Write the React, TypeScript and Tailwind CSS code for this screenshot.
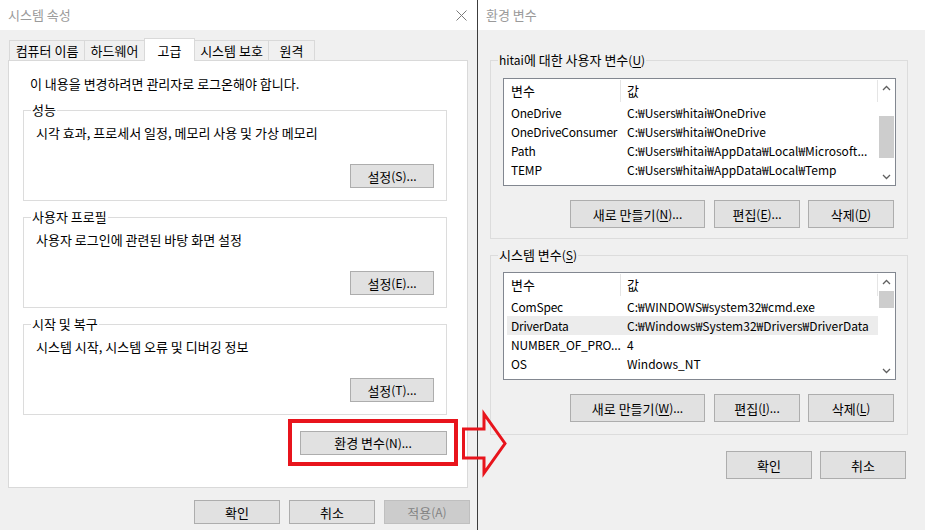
import type { ReactNode } from "react";

function T({ s }: { s: string }) {
  const parts = s.split(/([\uac00-\ud7a3][\uac00-\ud7a3 ]*)/);
  return (
    <>
      {parts.map((p, i) =>
        i % 2 === 1 ? (
          <span key={i} className="text-[13px]">
            {p}
          </span>
        ) : (
          p
        )
      )}
    </>
  );
}

function Btn({
  children,
  className = "",
  disabled = false,
}: {
  children: ReactNode;
  className?: string;
  disabled?: boolean;
}) {
  return (
    <div
      className={`flex shrink-0 items-center justify-center whitespace-pre border leading-none ${
        disabled
          ? "border-[#bfbfbf] bg-[#cccccc] text-[#838383]"
          : "border-[#adadad] bg-[#e1e1e1] text-black"
      } ${className}`}
    >
      {children}
    </div>
  );
}

function Group({
  label,
  labelBg,
  className = "",
  children,
}: {
  label: ReactNode;
  labelBg: string;
  className?: string;
  children: ReactNode;
}) {
  return (
    <div className={`relative flex shrink-0 flex-col border border-[#dcdcdc] ${className}`}>
      <span className={`absolute -top-[9px] left-[7px] whitespace-pre px-px leading-[16px] ${labelBg}`}>{label}</span>
      {children}
    </div>
  );
}

function Chevron({ up }: { up?: boolean }) {
  return (
    <svg width="9" height="6" viewBox="0 0 9 6" className="text-[#606060]">
      <path
        d={up ? "M1 5 L4.5 1.5 L8 5" : "M1 1 L4.5 4.5 L8 1"}
        fill="none"
        stroke="currentColor"
        strokeWidth="1.3"
      />
    </svg>
  );
}

type Row = { name: string; value: string };

function VarList({
  rows,
  selected = -1,
  top,
  thumbTop,
  thumbHeight,
}: {
  rows: Row[];
  selected?: number;
  top: string;
  thumbTop: string;
  thumbHeight: string;
}) {
  return (
    <div className={`ml-[12px] flex h-[108px] w-[393px] shrink-0 overflow-hidden border border-[#828790] bg-white ${top}`}>
      <div className="flex min-w-0 flex-1 flex-col overflow-hidden">
        {/* Header */}
        <div className="flex h-[24px] shrink-0 items-center text-[13px]">
          <div className="w-[116px] shrink-0 pl-[7px]">변수</div>
          <div className="h-[22px] w-px bg-[#e5e5e5]" />
          <div className="flex-1 pl-[6px]">값</div>
          <div className="h-[22px] w-px bg-[#e5e5e5]" />
        </div>
        {rows.map((r, i) => (
          <div
            key={r.name}
            className={`ml-[3px] flex h-[19px] shrink-0 leading-[19px] ${i === selected ? "bg-[#ececec]" : ""}`}
          >
            <div className="w-[114px] shrink-0 overflow-hidden whitespace-nowrap pl-[4px] tracking-[-0.2px]">{r.name}</div>
            <div className="min-w-0 flex-1 truncate pl-[6px] pr-[4px]">{r.value}</div>
          </div>
        ))}
      </div>
      {/* Scrollbar */}
      <div className="flex w-[17px] shrink-0 flex-col">
        <div className="flex h-[17px] items-center justify-center">
          <Chevron up />
        </div>
        <div className="flex-1">
          <div className={`ml-px mr-px bg-[#cdcdcd] ${thumbTop} ${thumbHeight}`} />
        </div>
        <div className="flex h-[17px] items-center justify-center">
          <Chevron />
        </div>
      </div>
    </div>
  );
}

const userVars: Row[] = [
  { name: "OneDrive", value: "C:₩Users₩hitai₩OneDrive" },
  { name: "OneDriveConsumer", value: "C:₩Users₩hitai₩OneDrive" },
  { name: "Path", value: "C:₩Users₩hitai₩AppData₩Local₩Microsoft..." },
  { name: "TEMP", value: "C:₩Users₩hitai₩AppData₩Local₩Temp" },
];

const systemVars: Row[] = [
  { name: "ComSpec", value: "C:₩WINDOWS₩system32₩cmd.exe" },
  { name: "DriverData", value: "C:₩Windows₩System32₩Drivers₩DriverData" },
  { name: "NUMBER_OF_PRO...", value: "4" },
  { name: "OS", value: "Windows_NT" },
];

const tabs = [
  { label: "컴퓨터 이름", w: "w-[76px]" },
  { label: "하드웨어", w: "w-[61px]" },
  { label: "고급", w: "w-[51px]", active: true },
  { label: "시스템 보호", w: "w-[75px]" },
  { label: "원격", w: "w-[47px]" },
];

export default function App() {
  return (
    <div className="relative flex h-[530px] w-[925px] overflow-hidden bg-[#f0f0f0] text-[12px] text-black font-['Noto_Sans_CJK_KR',sans-serif]">
      {/* 시스템 속성 */}
      <div className="flex w-[478px] shrink-0 flex-col border-r border-[#3c3c3c] bg-[#f0f0f0] text-[13px]">
        <div className="flex h-[30px] shrink-0 items-center justify-between bg-white pl-2 pr-[10px] text-[#9a9a9a]">
          <span>시스템 속성</span>
          <svg width="11" height="11" viewBox="0 0 11 11">
            <path d="M0.5 0.5 L10.5 10.5 M10.5 0.5 L0.5 10.5" stroke="#7a7a7a" strokeWidth="1" />
          </svg>
        </div>

        {/* Tabs */}
        <div className="mt-[8px] flex h-[22px] shrink-0 items-end pl-[9px]">
          {tabs.map((t, i) =>
            t.active ? (
              <div
                key={t.label}
                className={`relative z-10 -mb-px -ml-px flex h-[23px] items-start justify-center border border-b-0 border-[#d9d9d9] bg-white pt-[2px] ${t.w}`}
              >
                {t.label}
              </div>
            ) : (
              <div
                key={t.label}
                className={`flex h-[20px] items-center justify-center border border-b-0 border-[#d9d9d9] bg-[#f0f0f0] ${i > 0 ? "-ml-px" : ""} ${t.w}`}
              >
                {t.label}
              </div>
            )
          )}
        </div>

        {/* Tab panel */}
        <div className="ml-2 flex h-[428px] w-[460px] shrink-0 flex-col border border-[#d9d9d9] bg-white">
          <div className="mt-[15px] pl-[21px] leading-[16px]">이 내용을 변경하려면 관리자로 로그온해야 합니다.</div>

          <Group label="성능" labelBg="bg-white" className="ml-[14px] mt-[18px] h-[91px] w-[424px]">
            <div className="pl-[12px] pt-[14px] leading-[16px]">시각 효과, 프로세서 일정, 메모리 사용 및 가상 메모리</div>
            <Btn className="mr-[12px] mt-[23px] h-[24px] w-[84px] self-end text-[12px]">
              <T s="설정(S)..." />
            </Btn>
          </Group>

          <Group label="사용자 프로필" labelBg="bg-white" className="ml-[14px] mt-[16px] h-[91px] w-[424px]">
            <div className="pl-[12px] pt-[14px] leading-[16px]">사용자 로그인에 관련된 바탕 화면 설정</div>
            <Btn className="mr-[12px] mt-[23px] h-[24px] w-[84px] self-end text-[12px]">
              <T s="설정(E)..." />
            </Btn>
          </Group>

          <Group label="시작 및 복구" labelBg="bg-white" className="ml-[14px] mt-[16px] h-[91px] w-[424px]">
            <div className="pl-[12px] pt-[14px] leading-[16px]">시스템 시작, 시스템 오류 및 디버깅 정보</div>
            <Btn className="mr-[12px] mt-[23px] h-[24px] w-[84px] self-end text-[12px]">
              <T s="설정(T)..." />
            </Btn>
          </Group>

          {/* highlight around 환경 변수 */}
          <div className="mr-[9px] mt-[4px] flex h-[47px] w-[170px] items-center justify-center self-end border-4 border-[#e8141c]">
            <Btn className="h-[24px] w-[147px] text-[12px]">
              <T s="환경 변수(N)..." />
            </Btn>
          </div>
        </div>

        <div className="mr-[7px] mt-[12px] flex justify-end gap-[9px]">
          <Btn className="h-[24px] w-[86px]">확인</Btn>
          <Btn className="h-[24px] w-[86px]">취소</Btn>
          <Btn disabled className="h-[24px] w-[86px] text-[12px]">
            <T s="적용(A)" />
          </Btn>
        </div>
      </div>

      {/* 환경 변수 */}
      <div className="flex min-w-0 flex-1 flex-col bg-[#f0f0f0]">
        <div className="flex h-[30px] shrink-0 items-center bg-white pl-2 text-[13px] text-[#9a9a9a]">환경 변수</div>

        <Group
          label={
            <>
              <T s="hitai에 대한 사용자 변수(" />
              <u className="underline-offset-2">U</u>)
            </>
          }
          labelBg="bg-[#f0f0f0]"
          className="ml-[12px] mt-[30px] h-[179px] w-[418px]"
        >
          <VarList rows={userVars} top="mt-[17px]" thumbTop="mt-[20px]" thumbHeight="h-[42px]" />
          <div className="mt-[14px] flex pl-[79px]">
            <Btn className="h-[28px] w-[135px]">
              <T s="새로 만들기(" />
              <u className="underline-offset-2">N</u>)...
            </Btn>
            <Btn className="ml-[9px] h-[28px] w-[86px]">
              <T s="편집(" />
              <u className="underline-offset-2">E</u>)...
            </Btn>
            <Btn className="ml-[8px] h-[28px] w-[86px]">
              <T s="삭제(" />
              <u className="underline-offset-2">D</u>)
            </Btn>
          </div>
        </Group>

        <Group
          label={
            <>
              <T s="시스템 변수(" />
              <u className="underline-offset-2">S</u>)
            </>
          }
          labelBg="bg-[#f0f0f0]"
          className="ml-[12px] mt-[16px] h-[180px] w-[418px]"
        >
          <VarList rows={systemVars} selected={1} top="mt-[16px]" thumbTop="mt-px" thumbHeight="h-[17px]" />
          <div className="mt-[14px] flex pl-[79px]">
            <Btn className="h-[28px] w-[135px]">
              <T s="새로 만들기(" />
              <u className="underline-offset-2">W</u>)...
            </Btn>
            <Btn className="ml-[9px] h-[28px] w-[86px]">
              <T s="편집(" />
              <u className="underline-offset-2">I</u>)...
            </Btn>
            <Btn className="ml-[8px] h-[28px] w-[86px]">
              <T s="삭제(" />
              <u className="underline-offset-2">L</u>)
            </Btn>
          </div>
        </Group>

        <div className="mt-[16px] flex pl-[248px] text-[13px]">
          <Btn className="h-[28px] w-[86px]">확인</Btn>
          <Btn className="ml-[8px] h-[28px] w-[86px]">취소</Btn>
        </div>
      </div>

      {/* arrow annotation */}
      <svg
        className="pointer-events-none absolute left-[455px] top-[405px]"
        width="60"
        height="75"
        viewBox="0 0 60 75"
      >
        <polygon
          points="8.5,24 29,24 29,9 50,38.5 29,68 29,53 8.5,53"
          fill="none"
          stroke="#e8141c"
          strokeWidth="3"
        />
      </svg>
    </div>
  );
}
